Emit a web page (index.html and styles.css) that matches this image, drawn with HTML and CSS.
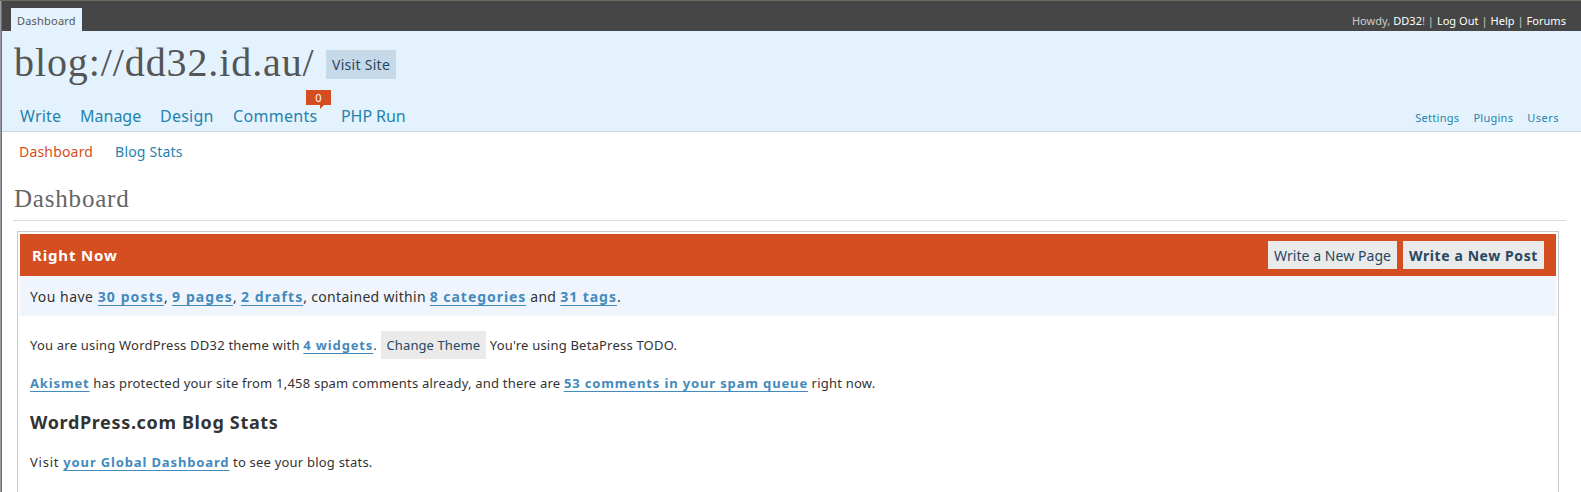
FILE: index.html
```
<!DOCTYPE html>
<html lang="en">
<head>
<meta charset="utf-8">
<title>Dashboard</title>
<link rel="stylesheet" href="styles.css">
</head>
<body>
<div class="window">
  <header class="topbar">
    <a class="tab">Dashboard</a>
    <p class="user">Howdy, <a>DD32</a>! | <a>Log Out</a> | <a>Help</a> | <a>Forums</a></p>
  </header>
  <div class="masthead">
    <div class="site">
      <h1 class="site-title">blog://dd32.id.au/</h1>
      <a class="button visit">Visit Site</a>
    </div>
    <nav class="nav">
      <a class="write">Write</a>
      <a class="manage">Manage</a>
      <a class="design">Design</a>
      <a class="comments">Comments<span class="bubble">0<svg class="tail" width="4" height="4" viewBox="0 0 4 4"><path d="M0 0H4L0 4Z" fill="#d54e21"/></svg></span></a>
      <a class="php">PHP Run</a>
      <div class="side">
        <a class="settings">Settings</a>
        <a class="plugins">Plugins</a>
        <a class="users">Users</a>
      </div>
    </nav>
  </div>
  <nav class="submenu">
    <a class="current">Dashboard</a>
    <a>Blog Stats</a>
  </nav>
  <main class="content">
    <h2 class="heading">Dashboard</h2>
    <section class="rightnow">
      <div class="bar">
        <h3 class="bar-title">Right Now</h3>
        <a class="button">Write a New Page</a>
        <a class="button strong">Write a New Post</a>
      </div>
      <p class="summary"><span class="lead">You have </span><a class="link count">30 posts</a>, <a class="link count">9 pages</a>, <a class="link count">2 drafts</a>, contained within <a class="link">8 categories</a> and <a class="link">31 tags</a>.</p>
      <div class="details">
        <p class="row">You are using WordPress DD32 theme with <a class="link">4 widgets</a>. <a class="button small">Change Theme</a> You're using BetaPress TODO.</p>
        <p class="row"><a class="link">Akismet</a> has protected your site from 1,458 spam comments already, and there are <a class="link">53 comments in your spam queue</a> right now.</p>
        <h4 class="subhead">WordPress.com Blog Stats</h4>
        <p class="row"><span class="visit-word">Visit </span><a class="link">your Global Dashboard</a> to see your blog stats.</p>
      </div>
    </section>
  </main>
</div>
</body>
</html>
```
FILE: styles.css
```
* { box-sizing: border-box; }
body {
  margin: 0;
  height: 492px;
  overflow: hidden;
  background: #fff;
  color: #333;
  font-family: "Noto Sans", "Open Sans", sans-serif;
}
h1, h2, h3, h4, p { margin: 0; }
a { text-decoration: none; }
.window {
  height: 492px;
  overflow: hidden;
  background: linear-gradient(90deg, #9b9aa0 1px, #6f6e72 1px) 0 0 / 2px 100% no-repeat;
  padding-left: 2px;
  border-top: 1px solid #6c6c5e;
}

.topbar {
  display: flex;
  justify-content: space-between;
  height: 30px;
  padding: 7px 15px 0 9px;
  background: #464646;
  font-size: 11px;
  line-height: 25px;
}
.tab {
  height: 23px;
  width: 71px;
  padding-left: 6px;
  background: #e4f2fd;
  color: #555;
  letter-spacing: .2px;
}
.user { color: #ccc; white-space: nowrap; letter-spacing: .04px; }
.user a { color: #fff; }

.masthead {
  height: 101px;
  background: #e4f2fd;
  border-bottom: 1px solid #c6d9e9;
}
.site { display: flex; height: 69px; padding-left: 12px; }
.site-title {
  width: 312px;
  font: 400 40px/64px "Liberation Serif", serif;
  letter-spacing: .9px;
  color: #555;
}
.button {
  display: inline-block;
  height: 28px;
  padding: 0 6px;
  background: #eaeaea;
  color: #264761;
  font-size: 14px;
  line-height: 30px;
  letter-spacing: .05px;
  white-space: nowrap;
}
.visit {
  width: 70px;
  height: 29px;
  margin-top: 19px;
  background: #c6d9e9;
  line-height: 29px;
  letter-spacing: .28px;
}
.strong { font-weight: 700; letter-spacing: .59px; }
.nav {
  display: flex;
  height: 31px;
  padding: 0 22px 0 18px;
  font-size: 16px;
  line-height: 33px;
}
.nav a, .submenu a { color: #2583ad; }
.write { width: 60px; letter-spacing: .2px; }
.manage { width: 80px; }
.design { width: 73px; letter-spacing: .25px; }
.comments { position: relative; width: 108px; letter-spacing: .3px; }
.php { letter-spacing: -.08px; }
.bubble {
  position: absolute;
  left: 73px;
  top: -10px;
  width: 25px;
  height: 15px;
  background: #d54e21;
  color: #fff;
  font-size: 11px;
  line-height: 16px;
  text-align: center;
}
.tail { position: absolute; left: 14px; top: 15px; }
.side {
  display: flex;
  gap: 14px;
  margin-left: auto;
  padding-top: 4px;
  font-size: 11px;
  line-height: 27px;
}
.settings { letter-spacing: .3px; }
.plugins { letter-spacing: .25px; }
.users { letter-spacing: .5px; }

.submenu {
  display: flex;
  gap: 22px;
  height: 39px;
  padding-left: 17px;
  font-size: 14px;
  line-height: 39px;
  letter-spacing: .18px;
}
.submenu .current { color: #d54e21; }

.content { padding: 6px 15px 0 11px; }
.heading {
  height: 44px;
  padding-left: 1px;
  border-bottom: 1px solid #dadada;
  color: #666;
  font: 400 25px/43px "Liberation Serif", serif;
  letter-spacing: .8px;
}
.rightnow {
  height: 300px;
  margin: 10px 7px 0 4px;
  padding: 2px;
  border: 1px solid #ccc;
}
.bar {
  display: flex;
  gap: 6px;
  height: 42px;
  padding: 7px 12px;
  background: #d54e21;
}
.bar-title {
  flex: 1;
  color: #fff;
  font-size: 15px;
  line-height: 28px;
  letter-spacing: .85px;
}
.summary {
  height: 40px;
  padding-left: 10px;
  background: #f0f5fd;
  font-size: 14px;
  line-height: 42px;
  letter-spacing: .3px;
  white-space: nowrap;
}
.lead { letter-spacing: .5px; }
.link {
  color: #448abd;
  font-weight: 700;
  letter-spacing: .86px;
  text-decoration: underline 1px;
  text-decoration-skip-ink: none;
  text-underline-offset: 3px;
}
.summary .link { letter-spacing: .95px; }
.summary .count { letter-spacing: 1.12px; }
.details { display: flex; flex-direction: column; gap: 10px; padding: 15px 10px 0; }
.row {
  height: 28px;
  font-size: 13px;
  line-height: 28px;
  letter-spacing: .21px;
  white-space: nowrap;
}
.row:last-child { line-height: 30px; }
.visit-word { letter-spacing: .75px; }
.small { font-size: 13px; line-height: 28px; letter-spacing: .1px; vertical-align: top; }
.subhead {
  height: 30px;
  font-size: 18px;
  line-height: 30px;
  letter-spacing: .65px;
}
```
